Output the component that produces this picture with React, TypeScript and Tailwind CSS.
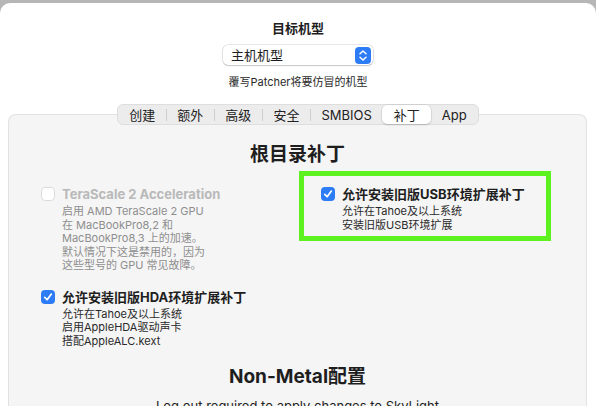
import React from "react";

const font = { fontFamily: 'Inter, "Noto Sans CJK SC", sans-serif' };

const tabs = ["创建", "额外", "高级", "安全", "SMBIOS", "补丁", "App"];
const activeTab = "补丁";

function CheckBox({ checked, disabled }: { checked?: boolean; disabled?: boolean }) {
  if (checked) {
    return (
      <span className="flex h-[14px] w-[14px] shrink-0 items-center justify-center rounded-[4px] bg-[#2d7cf6]">
        <svg viewBox="0 0 14 14" className="h-[12px] w-[12px]">
          <path d="M3.2 7.4 L6 10.2 L10.9 3.6" fill="none" stroke="white" strokeWidth="2" strokeLinecap="round" strokeLinejoin="round" />
        </svg>
      </span>
    );
  }
  return (
    <span
      className={`h-[14px] w-[14px] shrink-0 rounded-[4px] border bg-white ${
        disabled ? "border-[#dcdcdc]" : "border-[#b0b0b0]"
      }`}
    />
  );
}

function Option({
  title,
  lines,
  checked,
  disabled,
}: {
  title: string;
  lines: string[];
  checked?: boolean;
  disabled?: boolean;
}) {
  return (
    <div>
      <div className="flex items-center gap-[7px]">
        <CheckBox checked={checked} disabled={disabled} />
        <span className={`text-[13px] leading-[14px] font-bold ${disabled ? "text-[#b9b9b9]" : "text-[#1e1e1e]"}`}>
          {title}
        </span>
      </div>
      <div className={`mt-[4px] pl-[21px] text-[11px] leading-[13.5px] ${disabled ? "text-[#8e8e8e]" : "text-[#2a2a2a]"}`}>
        {lines.map((l) => (
          <div key={l}>{l}</div>
        ))}
      </div>
    </div>
  );
}

function Popup() {
  return (
    <div className="mt-[9px] flex h-[20px] w-[150px] shrink-0 items-center justify-between rounded-[5px] bg-white pl-[8px] pr-[2px] shadow-[0_0_0_0.5px_rgba(0,0,0,0.18),0_1px_1.5px_rgba(0,0,0,0.15)]">
      <span className="text-[13px] leading-[16px] text-[#1e1e1e]">主机机型</span>
      <span className="flex h-[17px] w-[16px] items-center justify-center rounded-[4px] bg-[#2d7cf6]">
        <svg viewBox="0 0 16 17" className="h-[17px] w-[16px]">
          <path d="M5 6.8 L8 4 L11 6.8" fill="none" stroke="white" strokeWidth="1.5" strokeLinecap="round" strokeLinejoin="round" />
          <path d="M5 10.2 L8 13 L11 10.2" fill="none" stroke="white" strokeWidth="1.5" strokeLinecap="round" strokeLinejoin="round" />
        </svg>
      </span>
    </div>
  );
}

function TabBar() {
  return (
    <div className="relative z-10 mt-[15px] flex h-[21px] shrink-0 items-center rounded-[6px] border border-[#dedede] bg-[#ececec] px-[1px]">
      {tabs.map((t, i) => {
        const active = t === activeTab;
        const nextActive = tabs[i + 1] === activeTab;
        const last = i === tabs.length - 1;
        return (
          <React.Fragment key={t}>
            <span
              className={`flex h-[19px] items-center justify-center text-[13px] leading-[16px] text-[#222] ${
                active
                  ? "rounded-[5px] bg-white px-[11.5px] shadow-[0_0_0_0.5px_rgba(0,0,0,0.1),0_1px_2px_rgba(0,0,0,0.15)]"
                  : "px-[10.5px]"
              }`}
            >
              {t}
            </span>
            {!last && !active && !nextActive && <span className="h-[12px] w-px bg-[#cdcdcd]" />}
          </React.Fragment>
        );
      })}
    </div>
  );
}

export default function App() {
  return (
    <div className="h-[406px] w-[596px] overflow-hidden bg-[#b6b6b6] pt-[3px]" style={font}>
      <div className="flex flex-col items-center rounded-t-[10px] bg-white pb-[40px]">
        <div className="mt-[17px] text-[13px] leading-[16px] font-bold text-[#1e1e1e]">目标机型</div>
        <Popup />
        <div className="mt-[10px] text-[11px] leading-[14px] text-[#2a2a2a]">覆写Patcher将要仿冒的机型</div>
        <TabBar />

        <div className="-mt-[11px] ml-[8px] flex w-[579px] flex-col items-center self-start rounded-t-[8px] border border-b-0 border-[#e2e2e2] bg-[#f5f5f5] pb-[20px]">
          <div className="mt-[28px] text-[19px] leading-[24px] font-bold text-[#1e1e1e]">根目录补丁</div>

          <div className="mt-[4px] grid grid-cols-[258px_252px] gap-y-[17px] self-start pl-[32px]">
            <div className="pt-[16px]">
              <Option
                disabled
                title="TeraScale 2 Acceleration"
                lines={[
                  "启用 AMD TeraScale 2 GPU",
                  "在 MacBookPro8,2 和",
                  "MacBookPro8,3 上的加速。",
                  "默认情况下这是禁用的，因为",
                  "这些型号的 GPU 常见故障。",
                ]}
              />
            </div>
            <div className="self-start border-[5px] border-[#5cf11f] pt-[11px] pb-[4px] pl-[17px]">
              <Option checked title="允许安装旧版USB环境扩展补丁" lines={["允许在Tahoe及以上系统", "安装旧版USB环境扩展"]} />
            </div>
            <div>
              <Option
                checked
                title="允许安装旧版HDA环境扩展补丁"
                lines={["允许在Tahoe及以上系统", "启用AppleHDA驱动声卡", "搭配AppleALC.kext"]}
              />
            </div>
          </div>

          <div className="mt-[17px] text-[19px] leading-[24px] font-bold text-[#1e1e1e]">Non-Metal配置</div>
          <div className="mt-[9px] text-[13px] leading-[16px] text-[#1e1e1e]">Log out required to apply changes to SkyLight</div>
        </div>
      </div>
    </div>
  );
}
